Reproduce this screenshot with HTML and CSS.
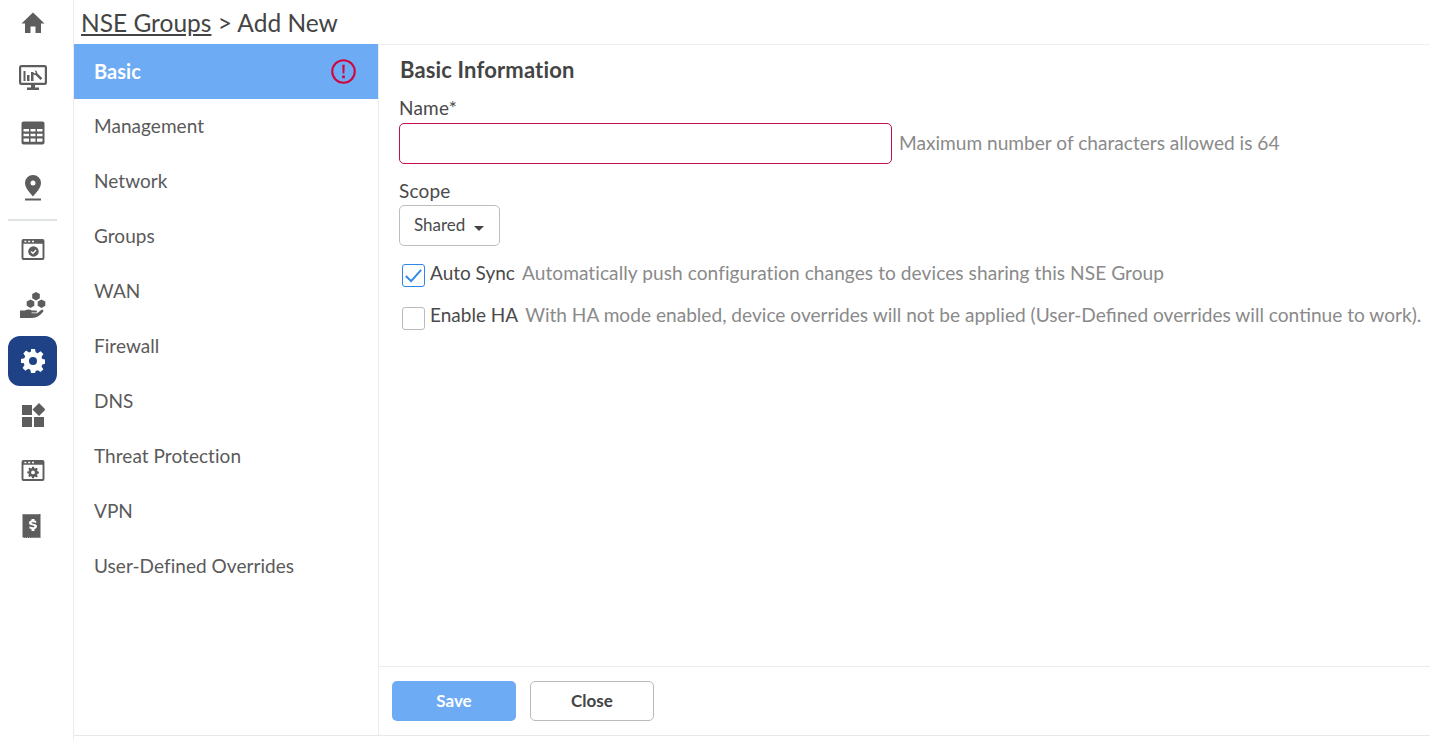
FILE: index.html
```html
<!DOCTYPE html>
<html lang="en">
<head>
<meta charset="utf-8">
<title>NSE Groups</title>
<link rel="stylesheet" href="styles.css">
</head>
<body>
<div class="app">
  <aside class="rail">
    <div class="rail-item rail-first"><svg viewBox="0 0 24 24" class="ico"><path d="M12 1.500 .5 12.500H4V22h5.500v-6.500h5V22H20v-9.500h3.500z"/></svg></div>
    <div class="rail-item"><svg viewBox="0 0 28 26" class="ico ico-lg"><path fill-rule="evenodd" d="M2.500 0h23A2.500 2.500 0 0 1 28 2.500v15a2.500 2.500 0 0 1-2.500 2.500H16v2.500h4V25H8v-2.500h4V20H2.500A2.500 2.500 0 0 1 0 17.500v-15A2.500 2.500 0 0 1 2.500 0zM2.200 2.200v15.600h23.600V2.200z"/><path d="M4.500 6h2v10h-2zM8 10h2.500v6H8zM12 7h2.500v9H12zM15.500 5l2.500 1.500.3 1.700 5 5-1.800 1.800-5-5-1.800-.3L14 7.500l1.800 1 1-.8z"/></svg></div>
    <div class="rail-item"><svg viewBox="0 0 24 24" class="ico"><path fill-rule="evenodd" d="M2.500 .5h19a2 2 0 0 1 2 2v19a2 2 0 0 1-2 2h-19a2 2 0 0 1-2-2v-19a2 2 0 0 1 2-2zM2.500 8v2.600h5.500V8zm7 0v2.600h5V8zm6.500 0v2.600h5.500V8zM2.500 12.700v2.600h5.500v-2.600zm7 0v2.600h5v-2.600zm6.500 0v2.600h5.500v-2.600zM2.500 17.400v2.600c0 .4.300.8.800.8H8v-3.400zm7 0v3.400h5v-3.400zm6.500 0v3.400h4.700c.5 0 .8-.4.800-.8v-2.600z"/></svg></div>
    <div class="rail-item"><svg viewBox="0 0 24 26" class="ico ico-pin"><path fill-rule="evenodd" d="M12 0a8 8 0 0 1 8 8c0 5-5 10-8 13.500C9 18 4 13 4 8a8 8 0 0 1 8-8zm0 5.500a2.500 2.500 0 1 0 0 5 2.500 2.500 0 0 0 0-5z"/><path d="M4 23.500h16V25.500H4z"/></svg></div>
    <div class="rail-sep"></div>
    <div class="rail-item rail-after-sep"><svg viewBox="0 0 24 22" class="ico ico-win"><path fill-rule="evenodd" d="M2 0h20a2 2 0 0 1 2 2v18a2 2 0 0 1-2 2H2a2 2 0 0 1-2-2V2a2 2 0 0 1 2-2zm0 5v15h20V5zM3 1.800v1.500h2V1.800zm4 0v1.500h2V1.800zm4 0v1.500h2V1.800z"/><circle cx="12.500" cy="13" r="5.500"/><path d="m10 13 2 2 3.200-3.500" fill="none" stroke="#fff" stroke-width="1.400"/></svg></div>
    <div class="rail-item"><svg viewBox="0 0 26 26" class="ico ico-hand"><path d="m16 0 3.800 2.100v4.200L16 8.400l-3.800-2.100V2.100zM10.500 7.500l3.800 2.100v4.200l-3.800 2.100-3.800-2.100V9.600zM21.500 7.500l3.800 2.100v4.200l-3.800 2.100-3.800-2.100V9.600z"/><path d="M0 18.500h5c2-1.500 5-1.500 7 0h4c1.300 0 1.300 2 0 2h-4.500v.7H17l4-3c1.800-1 3 .4 2 1.800-2.500 3-6.500 6-11 6H3.500l-1 .5H0z"/></svg></div>
    <div class="rail-item rail-active"><svg viewBox="0 0 24 24" class="ico ico-white"><path fill-rule="evenodd" d="M10 0h4l.7 3.300 2 .9L19.600 2.300l2.800 2.800-1.900 2.900.9 2 3.300.7v4l-3.300.7-.9 2 1.900 2.900-2.800 2.800-2.900-1.900-2 .9L14 24h-4l-.7-3.300-2-.9-2.900 1.900-2.800-2.800 1.900-2.900-.9-2L0 14v-4l3.300-.7.9-2L2.300 4.400 5.100 1.600 8 3.500l2-.9zM12 8a4 4 0 1 0 0 8 4 4 0 0 0 0-8z"/></svg></div>
    <div class="rail-item rail-dash"><svg viewBox="0 0 24 24" class="ico"><path d="M1 2h10v10H1zM1 14h10v10H1zM13 14h10v10H13zM18 0l6.500 6.500L18 13l-6.500-6.500z"/></svg></div>
    <div class="rail-item"><svg viewBox="0 0 24 22" class="ico ico-win"><path fill-rule="evenodd" d="M2 0h20a2 2 0 0 1 2 2v18a2 2 0 0 1-2 2H2a2 2 0 0 1-2-2V2a2 2 0 0 1 2-2zm0 5v15h20V5zM3 1.800v1.500h2V1.800zm4 0v1.500h2V1.800zm4 0v1.500h2V1.800z"/><path fill-rule="evenodd" d="M11 7h2l.3 1.500 1.100.5 1.400-.9 1.300 1.300-.9 1.400.5 1.100 1.500.3v2l-1.500.3-.5 1.100.9 1.400-1.300 1.300-1.400-.9-1.100.5L13 19h-2l-.3-1.500-1.100-.5-1.400.9-1.300-1.300.9-1.400-.5-1.100L6 14v-2l1.500-.3.500-1.100-.9-1.400 1.300-1.300 1.400.9 1.100-.5zm1 4a2 2 0 1 0 0 4 2 2 0 0 0 0-4z"/></svg></div>
    <div class="rail-item"><svg viewBox="0 0 22 24" class="ico"><path fill-rule="evenodd" d="M.5 0h1v.4h1V0h1v.4h1V0h1v.4h1V0h1v.4h1V0h1v.4h1V0h1v.4h1V0h1v.4h1V0h1v.4h1V0h2v24h-1v-.4h-1v.4h-1v-.4h-1v.4h-1v-.4h-1v.4h-1v-.4h-1v.4h-1v-.4H9v.4H8v-.4H7v.4H6v-.4H5v.4H4v-.4H3v.4H2v-.4H.5zM9.500 5v1.300C8 6.700 7 7.700 7 9c0 2.900 5.500 1.800 5.500 3.500 0 1.200-3 .9-5-.3v2.300c.6.300 1.300.5 2 .6V17h3v-1.900c1.500-.4 2.500-1.400 2.500-2.800 0-3-5.500-2-5.500-3.500 0-1 2.400-.8 4.700.2V7c-.6-.3-1.100-.5-1.700-.6V5z"/></svg></div>
  </aside>
  <div class="content">
    <header class="crumb"><a class="crumb-link">NSE Groups</a> &gt; Add New</header>
    <div class="panel">
      <nav class="tabs">
        <div class="tab tab-active">Basic
          <svg viewBox="0 0 24 24" class="alert"><circle cx="12" cy="12" r="10.800" fill="none" stroke="#d0073f" stroke-width="2"/><path d="M10.800 5.500h2.400l-.4 8.500h-1.600zM10.700 15.800h2.600v2.600h-2.600z" fill="#d0073f"/></svg>
        </div>
        <div class="tab">Management</div>
        <div class="tab">Network</div>
        <div class="tab">Groups</div>
        <div class="tab">WAN</div>
        <div class="tab">Firewall</div>
        <div class="tab">DNS</div>
        <div class="tab">Threat Protection</div>
        <div class="tab">VPN</div>
        <div class="tab">User-Defined Overrides</div>
      </nav>
      <main class="main">
        <div class="form">
          <h2 class="title">Basic Information</h2>
          <div class="label label-name">Name*</div>
          <div class="field-row">
            <div class="input"></div>
            <span class="hint hint-field">Maximum number of characters allowed is 64</span>
          </div>
          <div class="label label-scope">Scope</div>
          <div class="select">Shared <span class="caret"></span></div>
          <div class="check-row check-first">
            <span class="box box-on"><svg viewBox="0 0 22 22" class="tick"><path d="M3 11.500 8.500 17 19 5" fill="none" stroke="#2f86e8" stroke-width="2"/></svg></span>
            <span class="check-label">Auto Sync</span>
            <span class="hint hint-sync">Automatically push configuration changes to devices sharing this NSE Group</span>
          </div>
          <div class="check-row check-second">
            <span class="box"></span>
            <span class="check-label">Enable HA</span>
            <span class="hint">With HA mode enabled, device overrides will not be applied (User-Defined overrides will continue to work).</span>
          </div>
        </div>
        <footer class="footer">
          <button class="btn btn-save">Save</button>
          <button class="btn btn-close">Close</button>
        </footer>
      </main>
    </div>
  </div>
</div>
</body>
</html>
```
FILE: styles.css
```css
* { box-sizing: border-box; }
html, body { margin: 0; height: 100%; background: #fff; overflow: hidden; }
body { font-family: "Lato", "Liberation Sans", sans-serif; color: #4a4a4a; }
.app { display: flex; height: 740px; }
.rail { width: 74px; flex: none; border-right: 1px solid #ececec; padding: 0 16px 0 8px; display: flex; flex-direction: column; align-items: stretch; }
.rail-item { height: 55px; display: flex; align-items: center; justify-content: center; flex: none; }
.rail-first { height: 50px; padding-bottom: 4px; }
.rail-after-sep { height: 56px; }
.rail-active { background: #1f4287; border-radius: 12px; height: 50px; margin: 4px 0 2px; }
.rail-dash { padding-bottom: 1px; }
.rail-sep { height: 2px; background: #dfe3e4; margin: 4px 0 0; flex: none; }
.ico { width: 24px; height: 24px; fill: #5d5d5d; }
.ico-lg { width: 28px; height: 26px; }
.ico-hand { width: 26px; height: 26px; }
.ico-pin { height: 26px; }
.ico-win { height: 21px; }
.ico-white { fill: #fff; }
.content { flex: 1; min-width: 0; display: flex; flex-direction: column; }
.crumb { height: 45px; padding: 8px 0 0 7px; font-size: 24.5px; line-height: 29px; color: #444; border-bottom: 1px solid #efefef; }
.crumb-link { text-decoration: underline; }
.panel { height: 691px; display: flex; border-bottom: 1px solid #e8e8e8; }
.tabs { width: 305px; flex: none; border-right: 1px solid #ececec; }
.tab { height: 55px; padding: 0 22px 2px 20px; display: flex; align-items: center; justify-content: space-between; font-size: 19px; letter-spacing: .05px; color: #5a5a5a; }
.tab-active { background: #6eabf5; color: #fff; font-weight: 700; font-size: 20px; margin-top: -1px; }
.alert { width: 25px; height: 25px; margin-top: 2px; }
.main { flex: 1; min-width: 0; display: flex; flex-direction: column; }
.form { flex: 1; padding: 0 0 0 20px; white-space: nowrap; }
.title { margin: 12px 0 0 1px; font-size: 22px; letter-spacing: .15px; line-height: 26px; font-weight: 700; color: #444; }
.label { font-size: 19px; letter-spacing: .2px; line-height: 23px; color: #4a4a4a; }
.label-name { margin-top: 13px; }
.label-scope { margin-top: 15px; }
.field-row { display: flex; align-items: center; margin-top: 4px; gap: 7px; }
.input { width: 493px; height: 41px; border: 1px solid #c2114a; border-radius: 5px; background: #fff; }
.hint { font-size: 19.13px; color: #8a8a8a; margin-left: -1px; }
.hint-field { padding-bottom: 2px; margin-left: 0; }
.hint-sync { letter-spacing: .06px; }
.select { width: 101px; height: 41px; margin-top: 3px; border: 1px solid #bdbdbd; border-radius: 5px; padding: 0 14px 3px; display: flex; align-items: center; font-size: 17px; color: #4a4a4a; }
.caret { margin: 9px 0 0 9px; border-top: 5px solid #444; border-left: 5px solid transparent; border-right: 5px solid transparent; }
.check-row { display: flex; align-items: center; height: 42px; margin-left: 3px; }
.check-first { margin-top: 5px; }
.box { width: 23px; height: 23px; margin: 6px 5px 0 0; border: 1px solid #bbb; border-radius: 3px; flex: none; display: flex; background: #fff; }
.check-second .box { margin-top: 8px; }
.box-on { border-color: #2f86e8; }
.tick { width: 21px; height: 21px; }
.check-label { font-size: 19px; color: #4a4a4a; margin-right: 8px; }
.footer { height: 69px; flex: none; border-top: 1px solid #ececec; padding: 14px 0 0 13px; display: flex; align-items: flex-start; gap: 14px; }
.btn { width: 124px; height: 40px; border-radius: 5px; padding: 0 0 2px; font: 700 17px "Lato", "Liberation Sans", sans-serif; }
.btn-save { background: #6eabf5; color: #fff; border: 0; }
.btn-close { background: #fff; color: #444; border: 1px solid #bbb; }
```
